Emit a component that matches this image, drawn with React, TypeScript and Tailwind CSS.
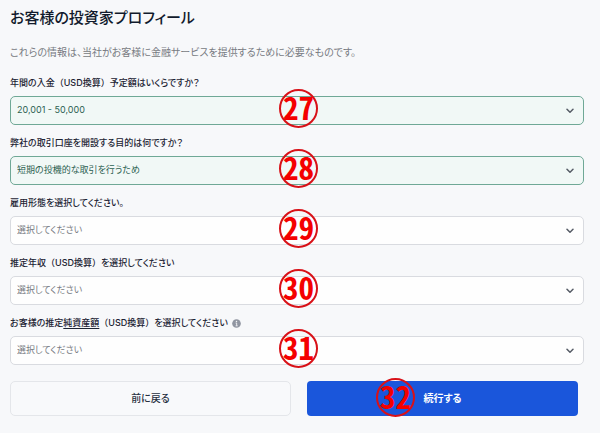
import { useId, type ReactNode } from "react";

type FieldProps = {
  label: ReactNode;
  info?: boolean;
  value?: string;
  step: number;
};

const PLACEHOLDER = "選択してください";

function StepBadge({ step, className }: { step: number; className: string }) {
  return (
    <span
      aria-hidden="true"
      className={`pointer-events-none absolute flex size-[39px] items-center justify-center rounded-full border-2 border-[#d81118] pb-1 font-['Noto_Sans_CJK_JP',sans-serif] text-[31px] leading-none font-bold text-[#f40000] [font-feature-settings:'hwid'] ${className}`}
    >
      {step}
    </span>
  );
}

function Chevron() {
  return (
    <svg
      viewBox="0 0 8 6"
      className="pointer-events-none absolute top-3 right-[10px] h-[6px] w-2"
      fill="none"
      stroke="#565c66"
      strokeWidth="1.5"
      strokeLinecap="round"
      strokeLinejoin="round"
      aria-hidden="true"
    >
      <path d="M1 1.2 4 4.2 7 1.2" />
    </svg>
  );
}

function InfoIcon() {
  return (
    <svg viewBox="0 0 10 10" className="mt-px size-[9px]" aria-hidden="true">
      <circle cx="5" cy="5" r="4.8" fill="#9095a1" />
      <circle cx="5" cy="2.7" r="0.8" fill="#f3f4f6" />
      <path d="M4 4.5h1.2v3M4 7.6h2.3" fill="none" stroke="#f3f4f6" />
    </svg>
  );
}

function UsdNote() {
  return <span className="[font-feature-settings:normal]">（USD換算）</span>;
}

function Field({ label, info, value, step }: FieldProps) {
  const id = useId();
  const tone = value
    ? "border-[#6fa896] bg-[#f1f8f6] text-[#2c6151]"
    : "border-[#d9dbe0] bg-[#fefefe] text-[#777b82]";
  return (
    <div>
      <div className="flex h-5 items-center gap-1">
        <label htmlFor={id} className="text-[9px] leading-4 font-medium text-[#1c2333]">
          {label}
        </label>
        {info && <InfoIcon />}
      </div>
      <div className="relative mt-[3px]">
        <select
          id={id}
          defaultValue={value ?? PLACEHOLDER}
          className={`block h-[29px] w-full appearance-none rounded-[5px] border pr-6 pb-px pl-[6px] text-[9px] outline-none ${tone}`}
        >
          <option>{value ?? PLACEHOLDER}</option>
        </select>
        <Chevron />
        <StepBadge step={step} className="-top-[7px] left-1/2 -ml-[18px]" />
      </div>
    </div>
  );
}

export default function App() {
  return (
    <main className="min-h-screen bg-[#f7f8fa] pt-[6px] pr-4 pb-4 pl-[10px] font-['Inter','Noto_Sans_CJK_JP',sans-serif] [font-feature-settings:'palt']">
      <h1 className="text-[15px] leading-6 font-medium text-[#111a2c]">お客様の投資家プロフィール</h1>
      <p className="mt-3 text-[10px] leading-5 text-[#777b82]">
        これらの情報は、当社がお客様に金融サービスを提供するために必要なものです。
      </p>
      <form className="mt-[11px]" onSubmit={(event) => event.preventDefault()}>
        <div className="flex flex-col gap-2">
          <Field
            label={<>年間の入金<UsdNote />予定額はいくらですか？</>}
            value="20,001 - 50,000"
            step={27}
          />
          <Field label="弊社の取引口座を開設する目的は何ですか？" value="短期の投機的な取引を行うため" step={28} />
          <Field label="雇用形態を選択してください。" step={29} />
          <Field label={<>推定年収<UsdNote />を選択してください</>} step={30} />
          <Field
            label={
              <>
                お客様の推定<span className="underline underline-offset-2">純資産額</span>
                <UsdNote />を選択してください
              </>
            }
            info
            step={31}
          />
        </div>
        <div className="mt-4 flex gap-4 pr-[6px]">
          <button
            type="button"
            className="h-[35px] flex-[280] rounded-[5px] border border-[#e4e6ea] bg-[#f8f9fb] text-[10px] font-medium text-[#27303f]"
          >
            前に戻る
          </button>
          <button
            type="submit"
            className="relative h-[35px] flex-[272] rounded-[4px] bg-[#1a56db] text-[10px] font-bold text-white"
          >
            続行する
            <StepBadge step={32} className="-top-[3px] left-[69px]" />
          </button>
        </div>
      </form>
    </main>
  );
}
